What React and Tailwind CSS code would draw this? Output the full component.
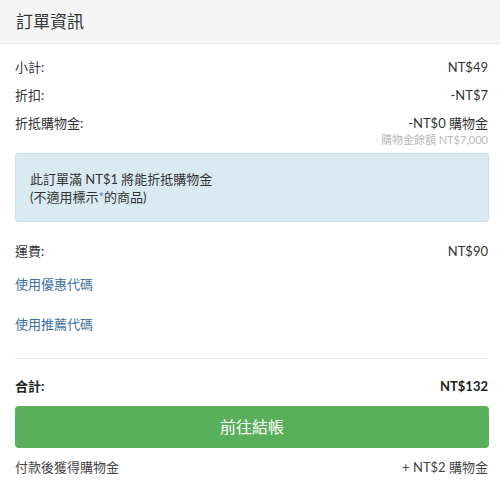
export default function App() {
  const font = { fontFamily: 'Lato, "Noto Sans CJK TC", sans-serif' };
  return (
    <div className="w-[500px] h-[500px] bg-white text-[13px] text-[#333]" style={font}>
      <div className="h-[44px] bg-[#f5f5f5] border-b border-[#e5e5e5] flex items-center px-[16px]">
        <h2 className="text-[17px] text-[#333]">訂單資訊</h2>
      </div>
      <div className="px-[15px] pr-[12px]">
        <div className="flex justify-between items-center mt-[15px] h-[18px]">
          <span>小計:</span>
          <span>NT$49</span>
        </div>
        <div className="flex justify-between items-center mt-[10px] h-[18px]">
          <span>折扣:</span>
          <span>-NT$7</span>
        </div>
        <div className="flex justify-between items-center mt-[10px] h-[18px]">
          <span>折抵購物金:</span>
          <span>-NT$0 購物金</span>
        </div>
        <div className="text-right text-[11px] text-[#bbb] leading-[14px]">購物金餘額 NT$7,000</div>
        <div className="mt-[6px] mr-[0px] bg-[#d9eaf2] border border-[#c5e2ec] rounded-[3px] px-[14px] py-[16px] leading-[18px] text-[#333] h-[69px] w-[474px]">
          <div>此訂單滿 NT$1 將能折抵購物金</div>
          <div>(不適用標示<span className="text-[#3a87c8]">*</span>的商品)</div>
        </div>
        <div className="flex justify-between items-center mt-[21px] h-[18px]">
          <span>運費:</span>
          <span>NT$90</span>
        </div>
        <div className="mt-[15px] h-[18px] flex items-center text-[#3c6e9e]">使用優惠代碼</div>
        <div className="mt-[22px] h-[18px] flex items-center text-[#3c6e9e]">使用推薦代碼</div>
        <div className="mt-[24px] border-t border-[#e8e8e8]"></div>
        <div className="flex justify-between items-center mt-[19px] h-[18px] font-bold text-[#222]">
          <span>合計:</span>
          <span>NT$132</span>
        </div>
        <button className="mt-[10px] w-[474px] h-[42px] rounded-[4px] bg-[#5aaf5a] text-white text-[16px] flex items-center justify-center">
          前往結帳
        </button>
        <div className="flex justify-between items-center mt-[11px] h-[18px] text-[#444]">
          <span>付款後獲得購物金</span>
          <span>+ NT$2 購物金</span>
        </div>
      </div>
    </div>
  );
}
